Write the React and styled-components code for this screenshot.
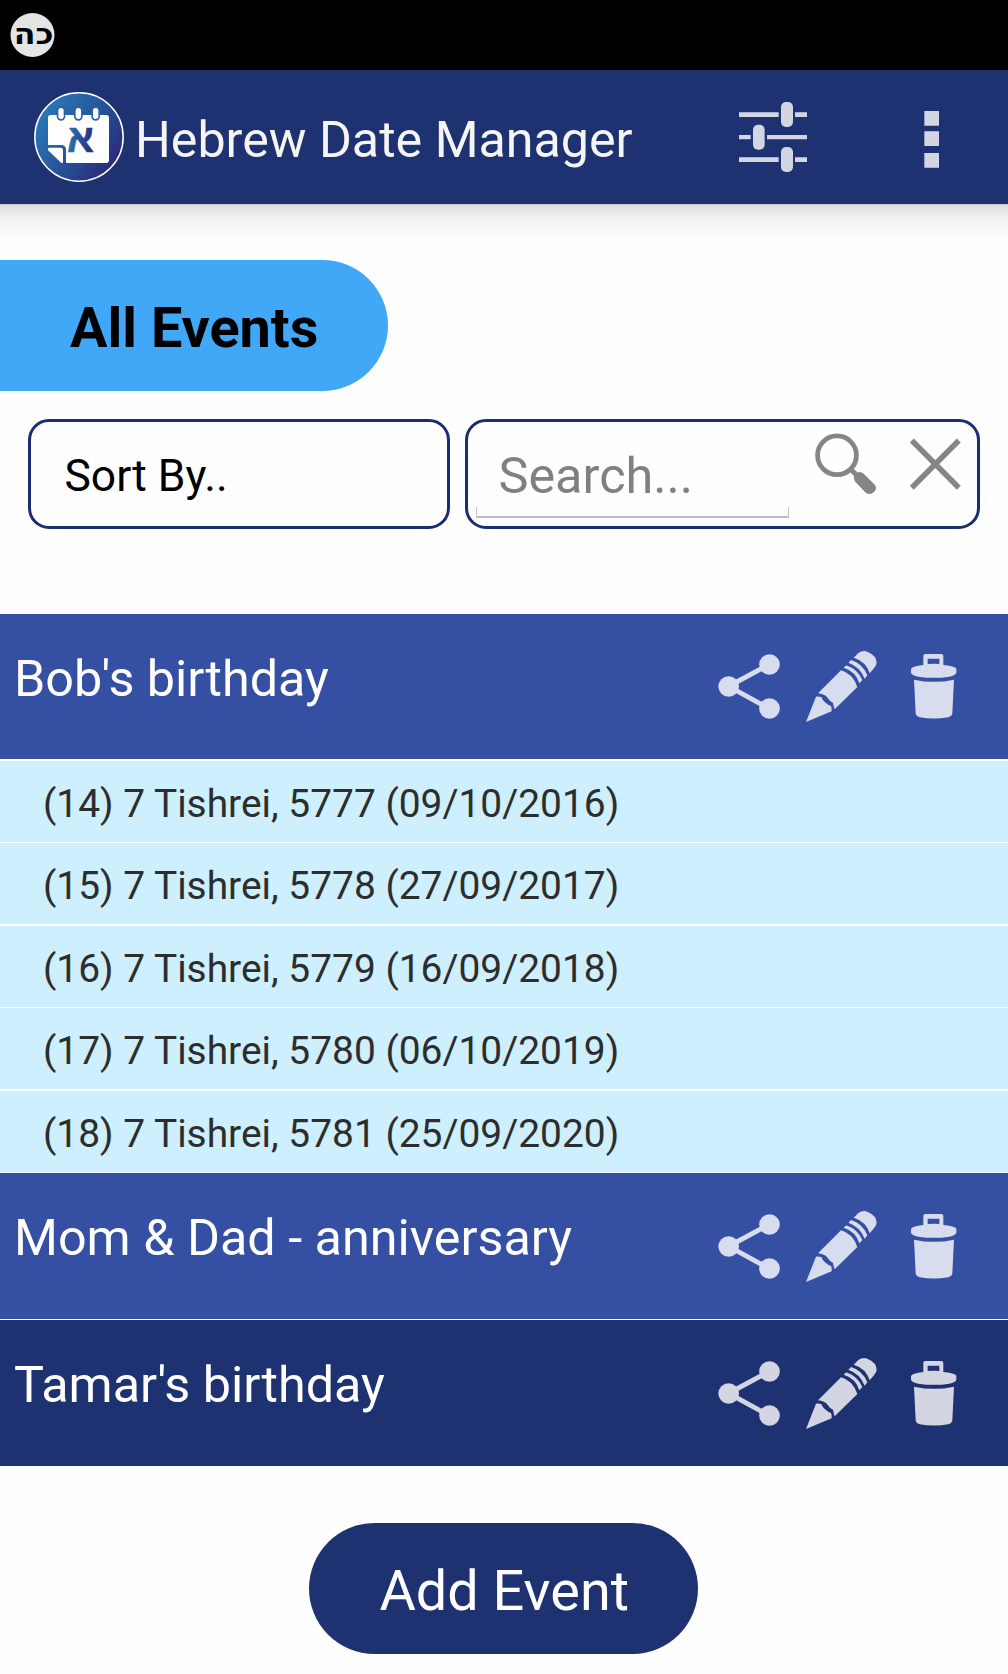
import styled, { createGlobalStyle } from "styled-components";

const GlobalStyle = createGlobalStyle`
  * {
    box-sizing: border-box;
  }

  body {
    margin: 0;
    background: #fefefe;
    font-family: Roboto, "Liberation Sans", sans-serif;
  }
`;

const Screen = styled.div`
  display: flex;
  flex-direction: column;
  width: 1008px;
  height: 1674px;
  overflow: hidden;
`;

const StatusBar = styled.div`
  display: flex;
  align-items: center;
  flex: none;
  height: 70px;
  padding-left: 10px;
  background: #000;
`;

const AppBar = styled.header`
  display: flex;
  align-items: center;
  flex: none;
  height: 134px;
  padding: 0 64px 0 34px;
  background: #1e3170;
`;

const AppTitle = styled.h1`
  flex: 1;
  margin: 0;
  padding: 5px 0 0 11px;
  font-size: 50.2px;
  font-weight: 400;
  line-height: 60px;
  white-space: nowrap;
  color: #f5f5f5;
`;

const Icon = styled.svg`
  display: block;
  flex: none;
  margin-left: ${({ $gap }) => $gap || 0}px;
  overflow: visible;
`;

const Shadow = styled.div`
  flex: none;
  height: 36px;
  background: linear-gradient(#c4c4c8, #e2e2e2 2px, #f3f3f3 16px, #fefefe);
`;

const Heading = styled.h2`
  flex: none;
  width: 388.4px;
  height: 131px;
  margin: 20.4px 0 27.6px;
  padding: 6px 0 0 70px;
  border-radius: 0 65.5px 65.5px 0;
  font-size: 55.8px;
  font-weight: 700;
  line-height: 125px;
  white-space: nowrap;
  color: #000;
  background: #40a8f6;
`;

const Filters = styled.div`
  display: grid;
  grid-template-columns: 422.4px 515px;
  gap: 14.6px;
  flex: none;
  height: 110px;
  margin-bottom: 85px;
  padding-left: 28px;
`;

const Box = styled.div`
  display: flex;
  border: 3px solid #1a2d70;
  border-radius: 21px;
`;

const SortBox = styled(Box)`
  padding: 4px 0 0 33.5px;
  font-size: 44.4px;
  line-height: 100px;
  color: #000;
`;

const SearchBox = styled(Box)`
  padding-left: 8px;
`;

const SearchField = styled.div`
  display: flex;
  flex-direction: column;
  justify-content: flex-end;
  width: 313px;
  height: 96px;
`;

const Placeholder = styled.span`
  padding: 0 0 1px 22.5px;
  font-size: 50.4px;
  line-height: 60px;
  color: #808080;
`;

const Underline = styled.span`
  height: 11px;
  border: 1px solid #c4c4c4;
  border-top: 0;
  border-bottom: 2px solid #bdbdbd;
`;

const List = styled.div`
  display: flex;
  flex-direction: column;
  flex: none;
  gap: 1.5px;
`;

const EventRow = styled.div`
  display: flex;
  align-items: center;
  height: 145.5px;
  padding: 0 48px 0.6px 14px;
  background: ${({ $dark }) => ($dark ? "#1e3170" : "#354fa3")};
  color: ${({ $dark }) => ($dark ? "#d3d6e2" : "#d7dcee")};
`;

const EventName = styled.span`
  flex: 1;
  padding-bottom: 15.4px;
  font-size: 50.3px;
  line-height: 60px;
  white-space: nowrap;
  color: #fff;
`;

const DateRow = styled.div`
  height: 81px;
  padding: 4px 0 0 43px;
  font-size: 38.9px;
  line-height: 78px;
  white-space: nowrap;
  color: #2d2d2d;
  background: #cdeffe;
`;

const AddButton = styled.button`
  align-self: center;
  flex: none;
  width: 389px;
  height: 131px;
  margin: 57px 0.6px 0 0;
  padding: 6px 0 0 1px;
  border: 0;
  border-radius: 65.5px;
  font-family: inherit;
  font-size: 55.8px;
  line-height: 125px;
  color: #fff;
  background: #1e3170;
`;

const events = [
  {
    name: "Bob's birthday",
    dates: [
      "(14) 7 Tishrei, 5777 (09/10/2016)",
      "(15) 7 Tishrei, 5778 (27/09/2017)",
      "(16) 7 Tishrei, 5779 (16/09/2018)",
      "(17) 7 Tishrei, 5780 (06/10/2019)",
      "(18) 7 Tishrei, 5781 (25/09/2020)",
    ],
  },
  { name: "Mom & Dad - anniversary", dates: [] },
  { name: "Tamar's birthday", dates: [], dark: true },
];

function StatusIcon() {
  return (
    <Icon width="45" height="45" viewBox="0 0 45 45">
      <circle cx="22.5" cy="22" r="22" fill="#e4e4e4" />
      <text
        x="0"
        y="0"
        transform="translate(23.5 30.6) scale(1.5 1)"
        textAnchor="middle"
        fontFamily="DejaVu Sans, Liberation Sans, sans-serif"
        fontWeight="700"
        fontSize="29"
        textLength="26.5"
        lengthAdjust="spacingAndGlyphs"
      >
        כה
      </text>
    </Icon>
  );
}

function Logo() {
  return (
    <Icon width="90" height="90" viewBox="102 276 270 270">
      <defs>
        <linearGradient id="logo" x1="0" y1="0.15" x2="1" y2="0.85">
          <stop offset="0" stopColor="#2b7dbd" />
          <stop offset="0.5" stopColor="#27559a" />
          <stop offset="1" stopColor="#2b2271" />
        </linearGradient>
        <linearGradient id="letter" x1="0" y1="0" x2="1" y2="0">
          <stop offset="0" stopColor="#2677b6" />
          <stop offset="1" stopColor="#2b2a7c" />
        </linearGradient>
      </defs>
      <circle cx="237" cy="411" r="132.5" fill="url(#logo)" stroke="#fff" strokeWidth="4.5" />
      <path
        d="M152 345H319Q327 345 327 353V481Q327 489 319 489H198V450Q198 435 183 435H144V353Q144 345 152 345Z"
        fill="#fff"
      />
      <path d="M146 443H181Q189 443 189 451V489H184L144 451Q143 444 146 443Z" fill="#fff" />
      {[183, 235, 287].map((x) => (
        <g key={x}>
          <path d={`M${x} 332V349`} stroke="#2a62a5" strokeWidth="26" strokeLinecap="round" />
          <path d={`M${x} 332V349`} stroke="#fff" strokeWidth="16" strokeLinecap="round" />
        </g>
      ))}
      <text
        x="241"
        y="456"
        textAnchor="middle"
        fontFamily="Liberation Sans, DejaVu Sans, sans-serif"
        fontWeight="700"
        fontSize="118"
        fill="url(#letter)"
        stroke="url(#letter)"
        strokeWidth="2"
      >
        א
      </text>
    </Icon>
  );
}

function SlidersIcon() {
  return (
    <Icon width="74" height="76" viewBox="108 117 222 228" fill="#d3d6e2">
      <path d="M117 157H236V171H117ZM285 157H321V171H285ZM117 225H152V238H117ZM201 225H321V238H201ZM117 292H236V306H117ZM285 292H321V306H285Z" />
      <rect x="243" y="126" width="36" height="75" rx="15" />
      <rect x="159" y="194" width="35" height="75" rx="15" />
      <rect x="243" y="261" width="36" height="75" rx="15" />
    </Icon>
  );
}

function MoreIcon() {
  return (
    <Icon $gap={110.5} width="24" height="64" viewBox="660 135 72 192" fill="#d3d6e2">
      <path d="M673 153H717V197H673ZM673 214H717V258H673ZM673 279H717V323H673Z" />
    </Icon>
  );
}

function SearchIcon() {
  return (
    <Icon $gap={24} width="66" height="74" viewBox="0 0 66 74" fill="#858585">
      <circle cx="24" cy="33.300" r="19.4" fill="none" stroke="#858585" strokeWidth="4.8" />
      <path d="M36 49L39.5 45.500L44.500 50.500Q48 49 50.500 51.500L61.500 62.500Q64.500 66 61.500 69.500Q57 74 52.500 70.500L42 59.500Q40.500 57.500 41 54Z" />
    </Icon>
  );
}

function ClearIcon() {
  return (
    <Icon $gap={27} width="60" height="74" viewBox="0 0 60 74">
      <path d="M5.800 18.500L52.800 65.800M52.800 18.500L5.800 65.800" stroke="#858585" strokeWidth="5.5" />
    </Icon>
  );
}

function ShareIcon() {
  return (
    <Icon width="67" height="76" viewBox="102 144 201 228" fill="currentColor">
      <path d="M268 193L146 259L268 326" fill="none" stroke="currentColor" strokeWidth="15" />
      <circle cx="146" cy="259.500" r="31" />
      <circle cx="268.500" cy="193.500" r="31" />
      <circle cx="268.500" cy="325.500" r="31" />
    </Icon>
  );
}

function PencilIcon() {
  return (
    <Icon $gap={23} width="76" height="76" viewBox="372 144 228 228" fill="currentColor">
      <path d="M378 366L408 290Q418 289 425 292Q428 304 441 311Q444 315 453 318Q456 325 455 334Z" />
      <path d="M414 280L483 211Q518 220 532 261L464 328Q460 318 459 308Q450 305 445 296Q438 285 431 284Q424 281 414 280Z" />
      <path d="M491 203L499 196Q534 209 547 240L538 250Q527 214 491 203Z" />
      <path d="M505 188L513 180Q548 190 562 226L554 236Q541 201 505 188Z" />
      <path d="M521 173L535 159Q548 150 562 155Q590 167 590 188Q590 195 582 205L569 220Q558 184 521 173Z" />
    </Icon>
  );
}

function TrashIcon() {
  return (
    <Icon $gap={28} width="52" height="76" viewBox="684 144 156 228" fill="currentColor">
      <path
        fillRule="evenodd"
        d="M730 195V168Q730 162 736 162H784Q790 162 790 168V195Q829 199 829 207V218Q827 226 808 230Q762 237 715 230Q695 226 693 218V207Q695 199 730 195ZM743 176V192Q760 191 778 192V176Z"
      />
      <path d="M702 239Q762 252 822 239L817 340Q817 348 805 352Q762 359 719 352Q707 348 707 340Z" />
    </Icon>
  );
}

function App() {
  return (
    <Screen>
      <GlobalStyle />
      <StatusBar>
        <StatusIcon />
      </StatusBar>
      <AppBar>
        <Logo />
        <AppTitle>Hebrew Date Manager</AppTitle>
        <SlidersIcon />
        <MoreIcon />
      </AppBar>
      <Shadow />
      <Heading>All Events</Heading>
      <Filters>
        <SortBox>Sort By..</SortBox>
        <SearchBox>
          <SearchField>
            <Placeholder>Search...</Placeholder>
            <Underline />
          </SearchField>
          <SearchIcon />
          <ClearIcon />
        </SearchBox>
      </Filters>
      <List>
        {events.map(({ name, dates, dark }) => [
          <EventRow key={name} $dark={dark}>
            <EventName>{name}</EventName>
            <ShareIcon />
            <PencilIcon />
            <TrashIcon />
          </EventRow>,
          ...dates.map((date) => <DateRow key={date}>{date}</DateRow>),
        ])}
      </List>
      <AddButton>Add Event</AddButton>
    </Screen>
  );
}

export default App;
